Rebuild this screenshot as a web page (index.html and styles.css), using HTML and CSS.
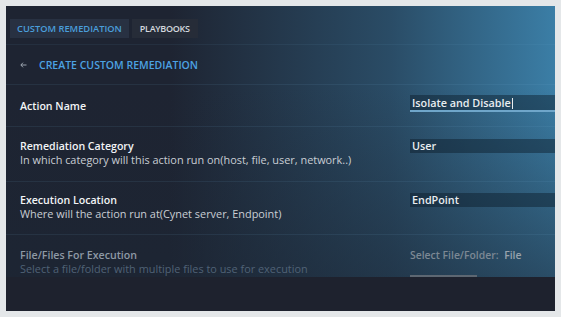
FILE: index.html
```
<!doctype html>
<html>
    <head>
        <title>Custom Remediation</title>
        <meta charset="UTF-8">
        <link rel="stylesheet" href="styles.css">
    </head>

    <body>
        <div class="panel">
            <div class="sheet">
                <!--Tabs Start-->
                <nav class="tabs">
                    <div class="tab active">CUSTOM REMEDIATION</div>
                    <div class="tab">PLAYBOOKS</div>
                </nav>
                <!--Tabs End-->

                <div class="header">
                    <svg class="back" width="7" height="6" viewBox="0 0 7 6">
                        <path d="M6.5 3H1M3 0.7L0.8 3L3 5.3" fill="none" stroke="#a9b2bc" stroke-width="0.9"/>
                    </svg>
                    <h1 class="title">CREATE CUSTOM REMEDIATION</h1>
                </div>

                <!--Form Start-->
                <div class="row name">
                    <div class="label">
                        <h2>Action Name</h2>
                    </div>
                    <div class="field line">Isolate and Disable<span class="caret"></span></div>
                </div>
                <div class="row category">
                    <div class="label">
                        <h2>Remediation Category</h2>
                        <p>In which category will this action run on(host, file, user, network..)</p>
                    </div>
                    <div class="field">User</div>
                </div>
                <div class="row location">
                    <div class="label">
                        <h2>Execution Location</h2>
                        <p>Where will the action run at(Cynet server, Endpoint)</p>
                    </div>
                    <div class="field">EndPoint</div>
                </div>
                <div class="row files off">
                    <div class="label">
                        <h2>File/Files For Execution</h2>
                        <p>Select a file/folder with multiple files to use for execution</p>
                    </div>
                    <div class="pick">
                        <div class="pick-text">Select File/Folder: <span>File</span></div>
                        <div class="pick-bar"></div>
                    </div>
                </div>
                <!--Form End-->
            </div>
        </div>
    </body>
</html>
```

FILE: styles.css
```
body{
    box-sizing: border-box;
    margin: 0;
    padding: 6px;
    background: #e4e7e9;
    font-family: "Open Sans", "Liberation Sans", Arial, sans-serif;
}

.panel{
    width: 549px;
    height: 305px;
    background: #1e222e;
    overflow: hidden;
}

.sheet{
    height: 271px;
    background:
        linear-gradient(to bottom, rgba(30, 36, 50, 0) 30%, rgba(28, 38, 52, 0.55) 100%),
        linear-gradient(to right, #1e2432 30%, #2a4c66 70%, #3b7ea6 100%);
}

/* Tabs */
.tabs{
    display: flex;
    gap: 3px;
    height: 39px;
    padding: 13px 0 0 4px;
    box-sizing: border-box;
    border-bottom: 1px solid rgba(120, 180, 220, 0.08);
}

.tab{
    height: 19px;
    line-height: 19px;
    padding: 0 8px;
    font-size: 9px;
    font-weight: 600;
    color: #d4d8de;
    background: #262c38;
    letter-spacing: -0.3px;
}

.tab.active{
    padding: 0 7px;
    font-size: 9.3px;
    color: #4a9edb;
    background: #283142;
    letter-spacing: 0;
}
/* Tabs */

.header{
    display: flex;
    align-items: center;
    height: 39px;
    padding-left: 14px;
    border-bottom: 1px solid rgba(120, 180, 220, 0.1);
}

.header .back{
    margin-right: 12px;
}

.header .title{
    margin: 0;
    font-size: 10.5px;
    font-weight: 600;
    color: #4ca2e2;
}

/* Rows */
.row{
    display: flex;
    justify-content: space-between;
    align-items: flex-start;
    box-sizing: border-box;
    padding-left: 14px;
    border-bottom: 1px solid rgba(120, 180, 220, 0.1);
}

.row.name{
    height: 42px;
    padding-top: 10px;
}
.row.name .label{
    padding-top: 4px;
}

.row.category{
    height: 55px;
    padding-top: 12px;
}

.row.location{
    height: 53px;
    padding-top: 11px;
}

.row.files{
    height: 42px;
    padding-top: 13px;
    border-bottom: none;
}

.label h2{
    margin: 0;
    font-size: 10.6px;
    line-height: 14px;
    font-weight: 600;
    color: #f2f4f6;
}

.label p{
    margin: 0;
    font-size: 10.9px;
    line-height: 13px;
    color: #c9ced4;
}

.row.off .label h2{
    color: #8e99a5;
}
.row.off .label p{
    color: #506276;
}

.field{
    width: 145px;
    height: 14px;
    line-height: 14px;
    padding-left: 2px;
    box-sizing: border-box;
    font-size: 10.8px;
    font-weight: 600;
    color: #e9edf0;
    background: rgba(12, 26, 40, 0.45);
}

.field.line{
    height: 17px;
    line-height: 16px;
    border-bottom: 2px solid #6fa6ca;
}

.caret{
    display: inline-block;
    width: 1px;
    height: 11px;
    margin-left: 1px;
    vertical-align: -2px;
    background: #e9edf0;
}

.pick{
    width: 145px;
    padding-left: 1px;
}

.pick-text{
    height: 14px;
    line-height: 14px;
    font-size: 10.4px;
    font-weight: 600;
    color: #7c8894;
}

.pick-text span{
    margin-left: 3px;
    color: #98a3ad;
}

.pick-bar{
    width: 67px;
    height: 2px;
    margin-top: 13px;
    background: #5d6772;
}
/* Rows */
```
